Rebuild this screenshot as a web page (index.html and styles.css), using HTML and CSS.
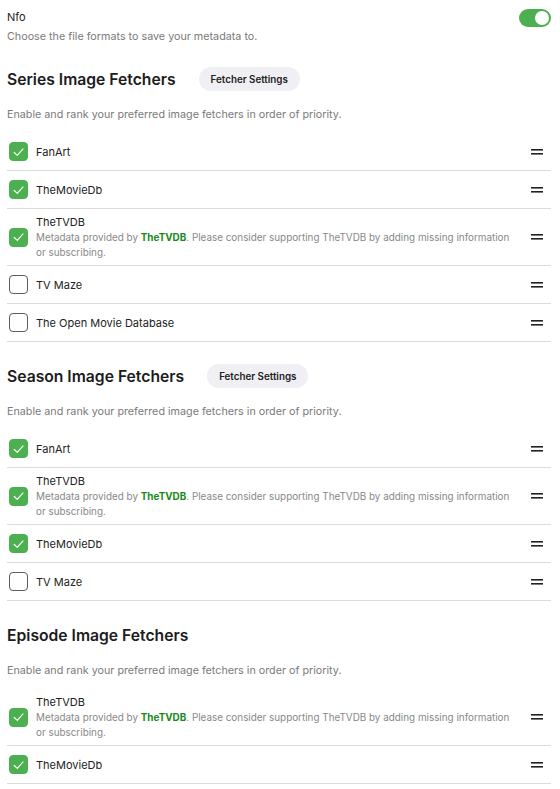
FILE: index.html
```html
<!DOCTYPE html>
<html>
<head>
<meta charset="utf-8">
<link rel="stylesheet" href="styles.css">
</head>
<body>
<div class="page">
  <div class="nfo">
    <div class="nfo-text">
      <div class="nfo-title">Nfo</div>
      <div class="muted nfo-desc">Choose the file formats to save your metadata to.</div>
    </div>
    <div class="toggle"><div class="knob"></div></div>
  </div>

  <section class="section">
    <div class="section-head">
      <h2>Series Image Fetchers</h2>
      <button class="pill">Fetcher Settings</button>
    </div>
    <p class="muted desc">Enable and rank your preferred image fetchers in order of priority.</p>
    <ul class="list">
      <li class="row"><span class="cb on"><svg viewBox="0 0 18 18"><path d="M4.5 9.5 L7.7 12.5 L13.8 5.8"/></svg></span><div class="txt"><div class="name">FanArt</div></div><span class="handle"><svg viewBox="0 0 12 6"><rect x="0" y="0" width="12" height="1.6"/><rect x="0" y="4" width="12" height="1.6"/></svg></span></li>
      <li class="row"><span class="cb on"><svg viewBox="0 0 18 18"><path d="M4.5 9.5 L7.7 12.5 L13.8 5.8"/></svg></span><div class="txt"><div class="name">TheMovieDb</div></div><span class="handle"><svg viewBox="0 0 12 6"><rect x="0" y="0" width="12" height="1.6"/><rect x="0" y="4" width="12" height="1.6"/></svg></span></li>
      <li class="row"><span class="cb on"><svg viewBox="0 0 18 18"><path d="M4.5 9.5 L7.7 12.5 L13.8 5.8"/></svg></span><div class="txt"><div class="name">TheTVDB</div><div class="sub">Metadata provided by <a class="link">TheTVDB</a>. Please consider supporting TheTVDB by adding missing information or subscribing.</div></div><span class="handle"><svg viewBox="0 0 12 6"><rect x="0" y="0" width="12" height="1.6"/><rect x="0" y="4" width="12" height="1.6"/></svg></span></li>
      <li class="row"><span class="cb"></span><div class="txt"><div class="name">TV Maze</div></div><span class="handle"><svg viewBox="0 0 12 6"><rect x="0" y="0" width="12" height="1.6"/><rect x="0" y="4" width="12" height="1.6"/></svg></span></li>
      <li class="row"><span class="cb"></span><div class="txt"><div class="name">The Open Movie Database</div></div><span class="handle"><svg viewBox="0 0 12 6"><rect x="0" y="0" width="12" height="1.6"/><rect x="0" y="4" width="12" height="1.6"/></svg></span></li>
    </ul>
  </section>

  <section class="section">
    <div class="section-head">
      <h2>Season Image Fetchers</h2>
      <button class="pill">Fetcher Settings</button>
    </div>
    <p class="muted desc">Enable and rank your preferred image fetchers in order of priority.</p>
    <ul class="list">
      <li class="row"><span class="cb on"><svg viewBox="0 0 18 18"><path d="M4.5 9.5 L7.7 12.5 L13.8 5.8"/></svg></span><div class="txt"><div class="name">FanArt</div></div><span class="handle"><svg viewBox="0 0 12 6"><rect x="0" y="0" width="12" height="1.6"/><rect x="0" y="4" width="12" height="1.6"/></svg></span></li>
      <li class="row"><span class="cb on"><svg viewBox="0 0 18 18"><path d="M4.5 9.5 L7.7 12.5 L13.8 5.8"/></svg></span><div class="txt"><div class="name">TheTVDB</div><div class="sub">Metadata provided by <a class="link">TheTVDB</a>. Please consider supporting TheTVDB by adding missing information or subscribing.</div></div><span class="handle"><svg viewBox="0 0 12 6"><rect x="0" y="0" width="12" height="1.6"/><rect x="0" y="4" width="12" height="1.6"/></svg></span></li>
      <li class="row"><span class="cb on"><svg viewBox="0 0 18 18"><path d="M4.5 9.5 L7.7 12.5 L13.8 5.8"/></svg></span><div class="txt"><div class="name">TheMovieDb</div></div><span class="handle"><svg viewBox="0 0 12 6"><rect x="0" y="0" width="12" height="1.6"/><rect x="0" y="4" width="12" height="1.6"/></svg></span></li>
      <li class="row"><span class="cb"></span><div class="txt"><div class="name">TV Maze</div></div><span class="handle"><svg viewBox="0 0 12 6"><rect x="0" y="0" width="12" height="1.6"/><rect x="0" y="4" width="12" height="1.6"/></svg></span></li>
    </ul>
  </section>

  <section class="section">
    <div class="section-head">
      <h2>Episode Image Fetchers</h2>
    </div>
    <p class="muted desc">Enable and rank your preferred image fetchers in order of priority.</p>
    <ul class="list">
      <li class="row"><span class="cb on"><svg viewBox="0 0 18 18"><path d="M4.5 9.5 L7.7 12.5 L13.8 5.8"/></svg></span><div class="txt"><div class="name">TheTVDB</div><div class="sub">Metadata provided by <a class="link">TheTVDB</a>. Please consider supporting TheTVDB by adding missing information or subscribing.</div></div><span class="handle"><svg viewBox="0 0 12 6"><rect x="0" y="0" width="12" height="1.6"/><rect x="0" y="4" width="12" height="1.6"/></svg></span></li>
      <li class="row"><span class="cb on"><svg viewBox="0 0 18 18"><path d="M4.5 9.5 L7.7 12.5 L13.8 5.8"/></svg></span><div class="txt"><div class="name">TheMovieDb</div></div><span class="handle"><svg viewBox="0 0 12 6"><rect x="0" y="0" width="12" height="1.6"/><rect x="0" y="4" width="12" height="1.6"/></svg></span></li>
    </ul>
  </section>
</div>
</body>
</html>
```

FILE: styles.css
```css
* { box-sizing: border-box; }
html, body { margin: 0; padding: 0; background: #fff; }
body {
  font-family: Inter, "Noto Sans", sans-serif;
  color: #1f1f1f;
  font-size: 11px;
}
.page { padding: 9px 9px 0 7px; }

.nfo { display: flex; justify-content: space-between; align-items: flex-start; }
.nfo-title { line-height: 16px; font-size: 11px; color: #222; }
.muted { color: #7a7a7a; font-size: 10.75px; line-height: 16px; }
.nfo-desc { margin-top: 4px; }
.toggle {
  width: 32px; height: 18px; border-radius: 9px; background: #4caf50;
  display: flex; align-items: center; justify-content: flex-end; padding: 0 2px;
}
.knob { width: 14px; height: 14px; border-radius: 50%; background: #fff; }

.section { margin-top: 22px; }
.section + .section { margin-top: 22px; }
.section-head { display: flex; align-items: center; gap: 23px; height: 24px; }
h2 { margin: 0; font-size: 15.7px; font-weight: 600; color: #1c1c1c; }
.pill {
  font-family: inherit; font-size: 9.8px; font-weight: 600; color: #222;
  background: #f0eff4; border: 0; border-radius: 12px; height: 24px; padding: 0 12px;
}
.desc { margin: 16px 0 0; }
.list { list-style: none; margin: 10px 0 0; padding: 0; }
.row {
  display: flex; align-items: center; min-height: 38px; padding: 5px 0;
  border-bottom: 1px solid #dcdcdc;
}
.cb {
  flex: none; width: 19px; height: 19px; margin-left: 2px; margin-right: 8px;
  border: 1px solid #5c5c5c; border-radius: 4px; background: #fff;
  display: flex; align-items: center; justify-content: center;
}
.cb.on { background: #4caf50; border-color: #4caf50; }
.cb svg { width: 18px; height: 18px; }
.cb path { fill: none; stroke: #fff; stroke-width: 1.2; stroke-linecap: round; stroke-linejoin: round; }
.txt { flex: 1; min-width: 0; padding-right: 14px; }
.name { line-height: 16px; font-size: 11px; color: #222; }
.sub { font-size: 9.9px; line-height: 15px; color: #888; }
.link { color: #188a18; font-weight: 700; text-decoration: none; }
.handle { flex: none; width: 12px; height: 6px; margin-right: 8px; display: flex; }
.handle svg { width: 12px; height: 6px; }
.handle rect { fill: #222; }
```
